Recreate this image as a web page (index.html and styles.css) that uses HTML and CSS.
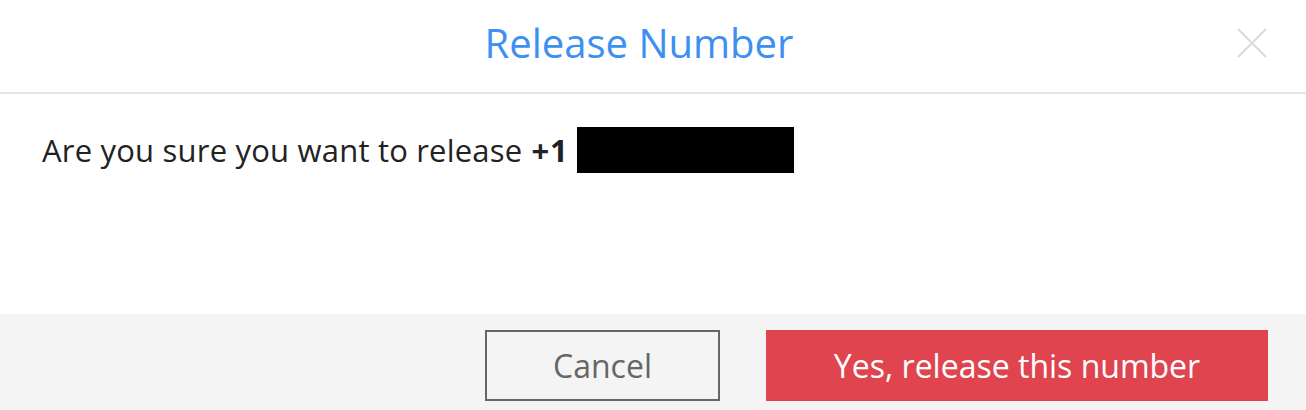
FILE: index.html
```html
<!DOCTYPE html>
<html>
<head>
<meta charset="utf-8">
<link rel="stylesheet" href="styles.css">
</head>
<body>
<div class="modal">
  <header class="modal-header">
    <h1 class="modal-title">Release Number</h1>
    <button class="close" aria-label="Close">
      <svg width="32" height="32" viewBox="0 0 32 32"><path d="M2 2L30 30M30 2L2 30" stroke="#dcdcdc" stroke-width="2.2" fill="none"/></svg>
    </button>
  </header>
  <div class="modal-body">
    <p class="message">Are you sure you want to release <strong>+1</strong><span class="redact"></span></p>
  </div>
  <footer class="modal-footer">
    <button class="btn btn-cancel">Cancel</button>
    <button class="btn btn-danger">Yes, release this number</button>
  </footer>
</div>
</body>
</html>
```

FILE: styles.css
```css
* { box-sizing: border-box; }
html, body { margin: 0; padding: 0; background: #fff; }
body { font-family: "Open Sans", sans-serif; }
.modal { width: 1306px; height: 410px; display: flex; flex-direction: column; }
.modal-header {
  height: 94px;
  border-bottom: 2px solid #e6e6e6;
  display: flex;
  align-items: center;
  justify-content: center;
  position: relative;
}
.modal-title {
  margin: 0 28px 0 0;
  font-weight: 400;
  font-size: 40px;
  line-height: 1;
  color: #3d8ff2;
  padding-bottom: 6px;
}
.close {
  position: absolute;
  right: 38px;
  top: 27px;
  border: 0;
  background: none;
  padding: 0;
  width: 32px;
  height: 32px;
}
.modal-body { flex: 1; padding: 33px 42px; }
.message { margin: 0; font-size: 31px; line-height: 46px; color: #222; letter-spacing: 0.2px; display: flex; align-items: center; }
.message strong { font-weight: 700; margin-left: 9px; letter-spacing: 1px; }
.redact { display: inline-block; width: 217px; height: 46px; background: #000; margin-left: 8px; }
.modal-footer {
  height: 96px;
  background: #f4f4f4;
  display: flex;
  justify-content: flex-end;
  align-items: flex-start;
  padding: 16px 38px 0 0;
  gap: 46px;
}
.btn {
  height: 71px;
  font-family: "Open Sans", sans-serif;
  font-size: 32px;
  cursor: pointer;
  padding: 0;
}
.btn-cancel {
  width: 235px;
  background: transparent;
  border: 2px solid #666;
  color: #666;
}
.btn-danger {
  width: 502px;
  background: #e0444f;
  border: 0;
  color: #fff;
}
```
